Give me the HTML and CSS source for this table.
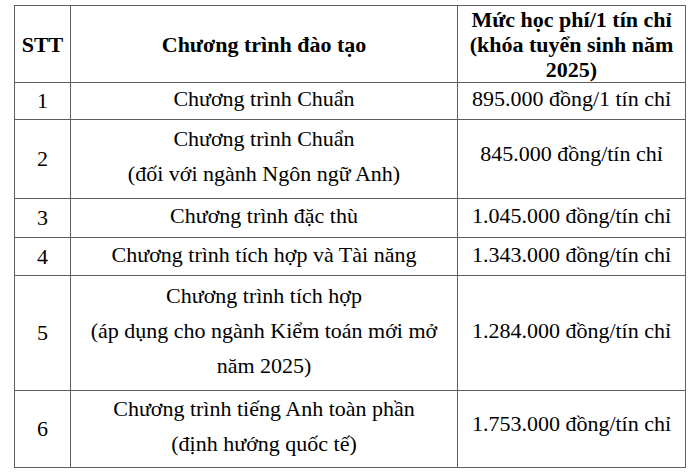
FILE: index.html
```html
<!DOCTYPE html>
<html lang="vi">
<head>
<meta charset="utf-8">
<title>Học phí</title>
<link rel="stylesheet" href="styles.css">
</head>
<body>
<div class="page">
  <table class="fees">
    <colgroup>
      <col class="c-stt">
      <col class="c-prog">
      <col class="c-fee">
    </colgroup>
    <thead>
      <tr class="r-head">
        <th>STT</th>
        <th>Chương trình đào tạo</th>
        <th class="head-fee">Mức học phí/1 tín chỉ<br>(khóa tuyển sinh năm<br>2025)</th>
      </tr>
    </thead>
    <tbody>
      <tr class="r-1">
        <td class="stt">1</td>
        <td class="prog">Chương trình Chuẩn</td>
        <td class="fee">895.000 đồng/1 tín chỉ</td>
      </tr>
      <tr class="r-2">
        <td class="stt">2</td>
        <td class="prog multi">Chương trình Chuẩn<br>(đối với ngành Ngôn ngữ Anh)</td>
        <td class="fee up">845.000 đồng/tín chỉ</td>
      </tr>
      <tr class="r-3">
        <td class="stt">3</td>
        <td class="prog">Chương trình đặc thù</td>
        <td class="fee">1.045.000 đồng/tín chỉ</td>
      </tr>
      <tr class="r-4">
        <td class="stt">4</td>
        <td class="prog">Chương trình tích hợp và Tài năng</td>
        <td class="fee">1.343.000 đồng/tín chỉ</td>
      </tr>
      <tr class="r-5">
        <td class="stt">5</td>
        <td class="prog multi">Chương trình tích hợp<br>(áp dụng cho ngành Kiểm toán mới mở<br>năm 2025)</td>
        <td class="fee">1.284.000 đồng/tín chỉ</td>
      </tr>
      <tr class="r-6">
        <td class="stt">6</td>
        <td class="prog multi">Chương trình tiếng Anh toàn phần<br>(định hướng quốc tế)</td>
        <td class="fee up">1.753.000 đồng/tín chỉ</td>
      </tr>
    </tbody>
  </table>
</div>
</body>
</html>
```

FILE: styles.css
```css
html, body {
  margin: 0;
  padding: 0;
  background: #ffffff;
  font-family: "Times New Roman", "Liberation Serif", Tinos, serif;
}

.page {
  padding: 5px 0 0 14px;
}

.fees {
  border-collapse: collapse;
  table-layout: fixed;
  width: 671px;
  font-family: "Times New Roman", "Liberation Serif", Tinos, serif;
  font-size: 22px;
  color: #000000;
}

.c-stt { width: 56px; }
.c-prog { width: 387px; }
.c-fee { width: 228px; }

.fees th,
.fees td {
  border: 1px solid #5e5e5e;
  padding: 0;
  text-align: center;
  vertical-align: middle;
  white-space: nowrap;
}

.fees th {
  font-weight: bold;
  line-height: 25px;
  padding-top: 1px;
}

.fees td {
  line-height: 32px;
}

.r-head { height: 77px; }
.r-1 { height: 37px; }
.r-2 { height: 79px; }
.r-3 { height: 39px; }
.r-4 { height: 38px; }
.r-5 { height: 115px; }
.r-6 { height: 77px; }

.fees .prog {
  padding-bottom: 4px;
}

.fees .prog.multi {
  line-height: 35px;
  padding-bottom: 6px;
}

.fees .fee {
  padding-bottom: 4px;
}

.fees .fee.up {
  padding-bottom: 10px;
}
```
